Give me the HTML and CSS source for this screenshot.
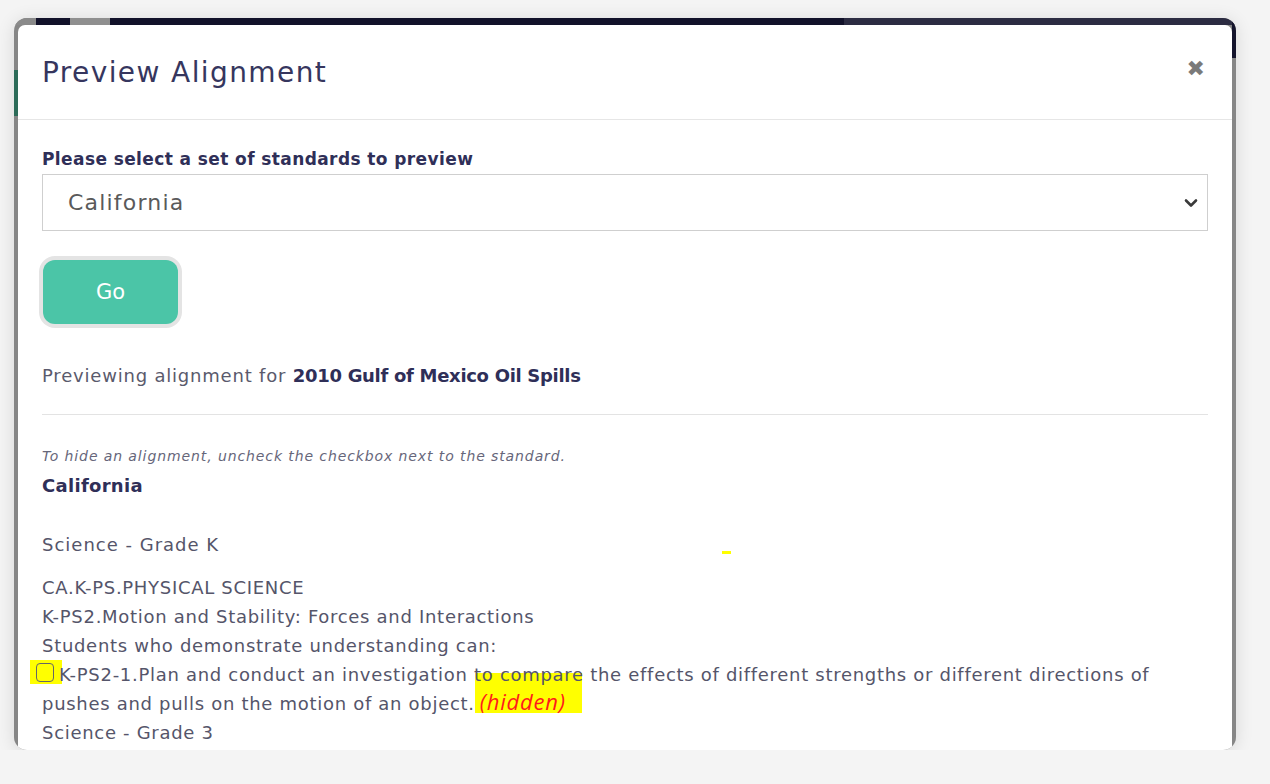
FILE: index.html
```html
<!DOCTYPE html>
<html lang="en">
<head>
    <meta charset="UTF-8">
    <meta name="viewport" content="width=device-width, initial-scale=1.0">
    <title>Preview Alignment</title>
    <link rel="stylesheet" href="styles.css">
</head>
<body>

    <div class="window">
        <div class="page-bar"></div>

        <div class="modal">
            <div class="modal-header">
                <h1 class="modal-title">Preview Alignment</h1>
                <span class="close-btn">&#10006;</span>
            </div>

            <div class="modal-body">
                <label class="field-label" for="standardSet">Please select a set of standards to preview</label>
                <div class="select-box">
                    <span class="select-value" id="standardSet">California</span>
                    <svg class="chevron" width="14" height="10" viewBox="0 0 14 10">
                        <path d="M2 2.5 L7 7.5 L12 2.5" fill="none" stroke="#3a3a3a" stroke-width="2.6" stroke-linecap="round" stroke-linejoin="round"/>
                    </svg>
                </div>

                <button class="go-btn">Go</button>

                <p class="preview-for">Previewing alignment for <strong>2010 Gulf of Mexico Oil Spills</strong></p>

                <hr class="divider">

                <p class="hint">To hide an alignment, uncheck the checkbox next to the standard.</p>
                <h3 class="state-name">California</h3>

                <p class="grade">Science - Grade K</p>

                <div class="standard">
                    <div>CA.K-PS.PHYSICAL SCIENCE</div>
                    <div>K-PS2.Motion and Stability: Forces and Interactions</div>
                    <div>Students who demonstrate understanding can:</div>
                    <div><span class="check-hl"><span class="check-box"></span></span>K-PS2-1.Plan and conduct an investigation to compare the effects of different strengths or different directions of pushes and pulls on the motion of an object.<span class="hidden-tag">(hidden)</span></div>
                    <div>Science - Grade 3</div>
                </div>

                <span class="stray-mark"></span>
            </div>
        </div>
    </div>

</body>
</html>
```

FILE: styles.css
```css
body {
    margin: 0;
    background: #f4f4f4;
    font-family: "DejaVu Sans", "Open Sans", sans-serif;
    color: #55556a;
}
.window {
    position: relative;
    margin: 18px 0 0 14px;
    width: 1222px;
    height: 732px;
    border-radius: 13px;
    overflow: hidden;
    background: #868686;
    box-shadow: 0 2px 18px rgba(0, 0, 0, 0.12);
}
/* bits of the page behind the dialog */
.window::before {
    content: "";
    position: absolute;
    left: 0;
    top: 52px;
    width: 4px;
    height: 46px;
    background: #2c6b58;
}
.window::after {
    content: "";
    position: absolute;
    right: 0;
    top: 0;
    width: 4px;
    height: 40px;
    background: #14142c;
}
.page-bar {
    height: 7px;
    background: linear-gradient(to right, #8a8a8a 0 22px, #12122a 22px 56px, #8f8f8f 56px 96px, #12122a 96px 830px, #2c2c42 830px);
}
.modal {
    margin: 0 4px;
    height: 725px;
    background: #fff;
    border-radius: 7px 7px 0 0;
}
.modal-header {
    display: flex;
    align-items: center;
    justify-content: space-between;
    height: 94px;
    padding: 0 27px 0 24px;
    border-bottom: 1px solid #e6e6e6;
}
.modal-title {
    margin: 0;
    font-size: 28px;
    font-weight: 400;
    letter-spacing: 1.4px;
    color: #36365e;
}
.close-btn {
    font-size: 22px;
    color: #7a7a7a;
    position: relative;
    top: -4px;
}
.modal-body {
    position: relative;
    z-index: 0;
    padding: 28px 24px 0 24px;
}
.field-label {
    display: block;
    font-size: 17px;
    font-weight: 700;
    letter-spacing: 0.4px;
    line-height: 22px;
    color: #2f2f58;
    margin-bottom: 4px;
}
.select-box {
    display: flex;
    align-items: center;
    justify-content: space-between;
    height: 55px;
    border: 1px solid #cfcfcf;
    padding: 0 9px 0 25px;
}
.select-value {
    font-size: 22px;
    letter-spacing: 1.2px;
    color: #5a5a5a;
}
.go-btn {
    display: block;
    margin: 29px 0 0 1px;
    width: 135px;
    height: 64px;
    border: none;
    border-radius: 12px;
    background: #4bc5a7;
    box-shadow: 0 0 0 4px #e4e4e4;
    color: #fff;
    font-family: "DejaVu Sans", "Open Sans", sans-serif;
    font-size: 21px;
}
.preview-for {
    margin: 38px 0 0 0;
    font-size: 18px;
    letter-spacing: 0.8px;
    line-height: 27px;
    color: #5a5a6c;
}
.preview-for strong {
    letter-spacing: -0.3px;
    color: #2f2f58;
}
.divider {
    margin: 25px 0 0 0;
    border: none;
    border-top: 1px solid #e3e3e3;
}
.hint {
    margin: 30px 0 0 0;
    font-size: 14px;
    font-style: italic;
    letter-spacing: 0.9px;
    line-height: 22px;
    color: #66667a;
}
.state-name {
    margin: 6px 0 0 0;
    font-size: 18px;
    font-weight: 700;
    letter-spacing: 0.3px;
    line-height: 26px;
    color: #2f2f58;
}
.grade {
    margin: 31px 0 0 0;
    font-size: 18px;
    letter-spacing: 1px;
    line-height: 29px;
}
.standard {
    margin-top: 14px;
    font-size: 18px;
    letter-spacing: 0.7px;
    line-height: 29px;
}
.check-hl {
    display: inline-block;
    width: 32px;
    height: 24px;
    margin: 0 -3px 0 -12px;
    vertical-align: -3px;
    background: #ffff00;
}
.check-box {
    display: block;
    width: 16px;
    height: 17px;
    margin: 3px 0 0 6px;
    border: 1.5px solid #666;
    border-radius: 4px;
}
.hidden-tag {
    position: relative;
    padding: 0 16px 0 5px;
    color: #ff1a1a;
    font-family: "Open Sans", sans-serif;
    font-style: italic;
    font-size: 22px;
    line-height: 18px;
    letter-spacing: 0.8px;
}
.hidden-tag::before {
    content: "";
    position: absolute;
    left: 0;
    right: 0;
    top: -13px;
    bottom: 3px;
    background: #ffff00;
    z-index: -1;
}
.stray-mark {
    position: absolute;
    left: 704px;
    top: 431px;
    width: 9px;
    height: 3px;
    background: #ffff00;
}
```
